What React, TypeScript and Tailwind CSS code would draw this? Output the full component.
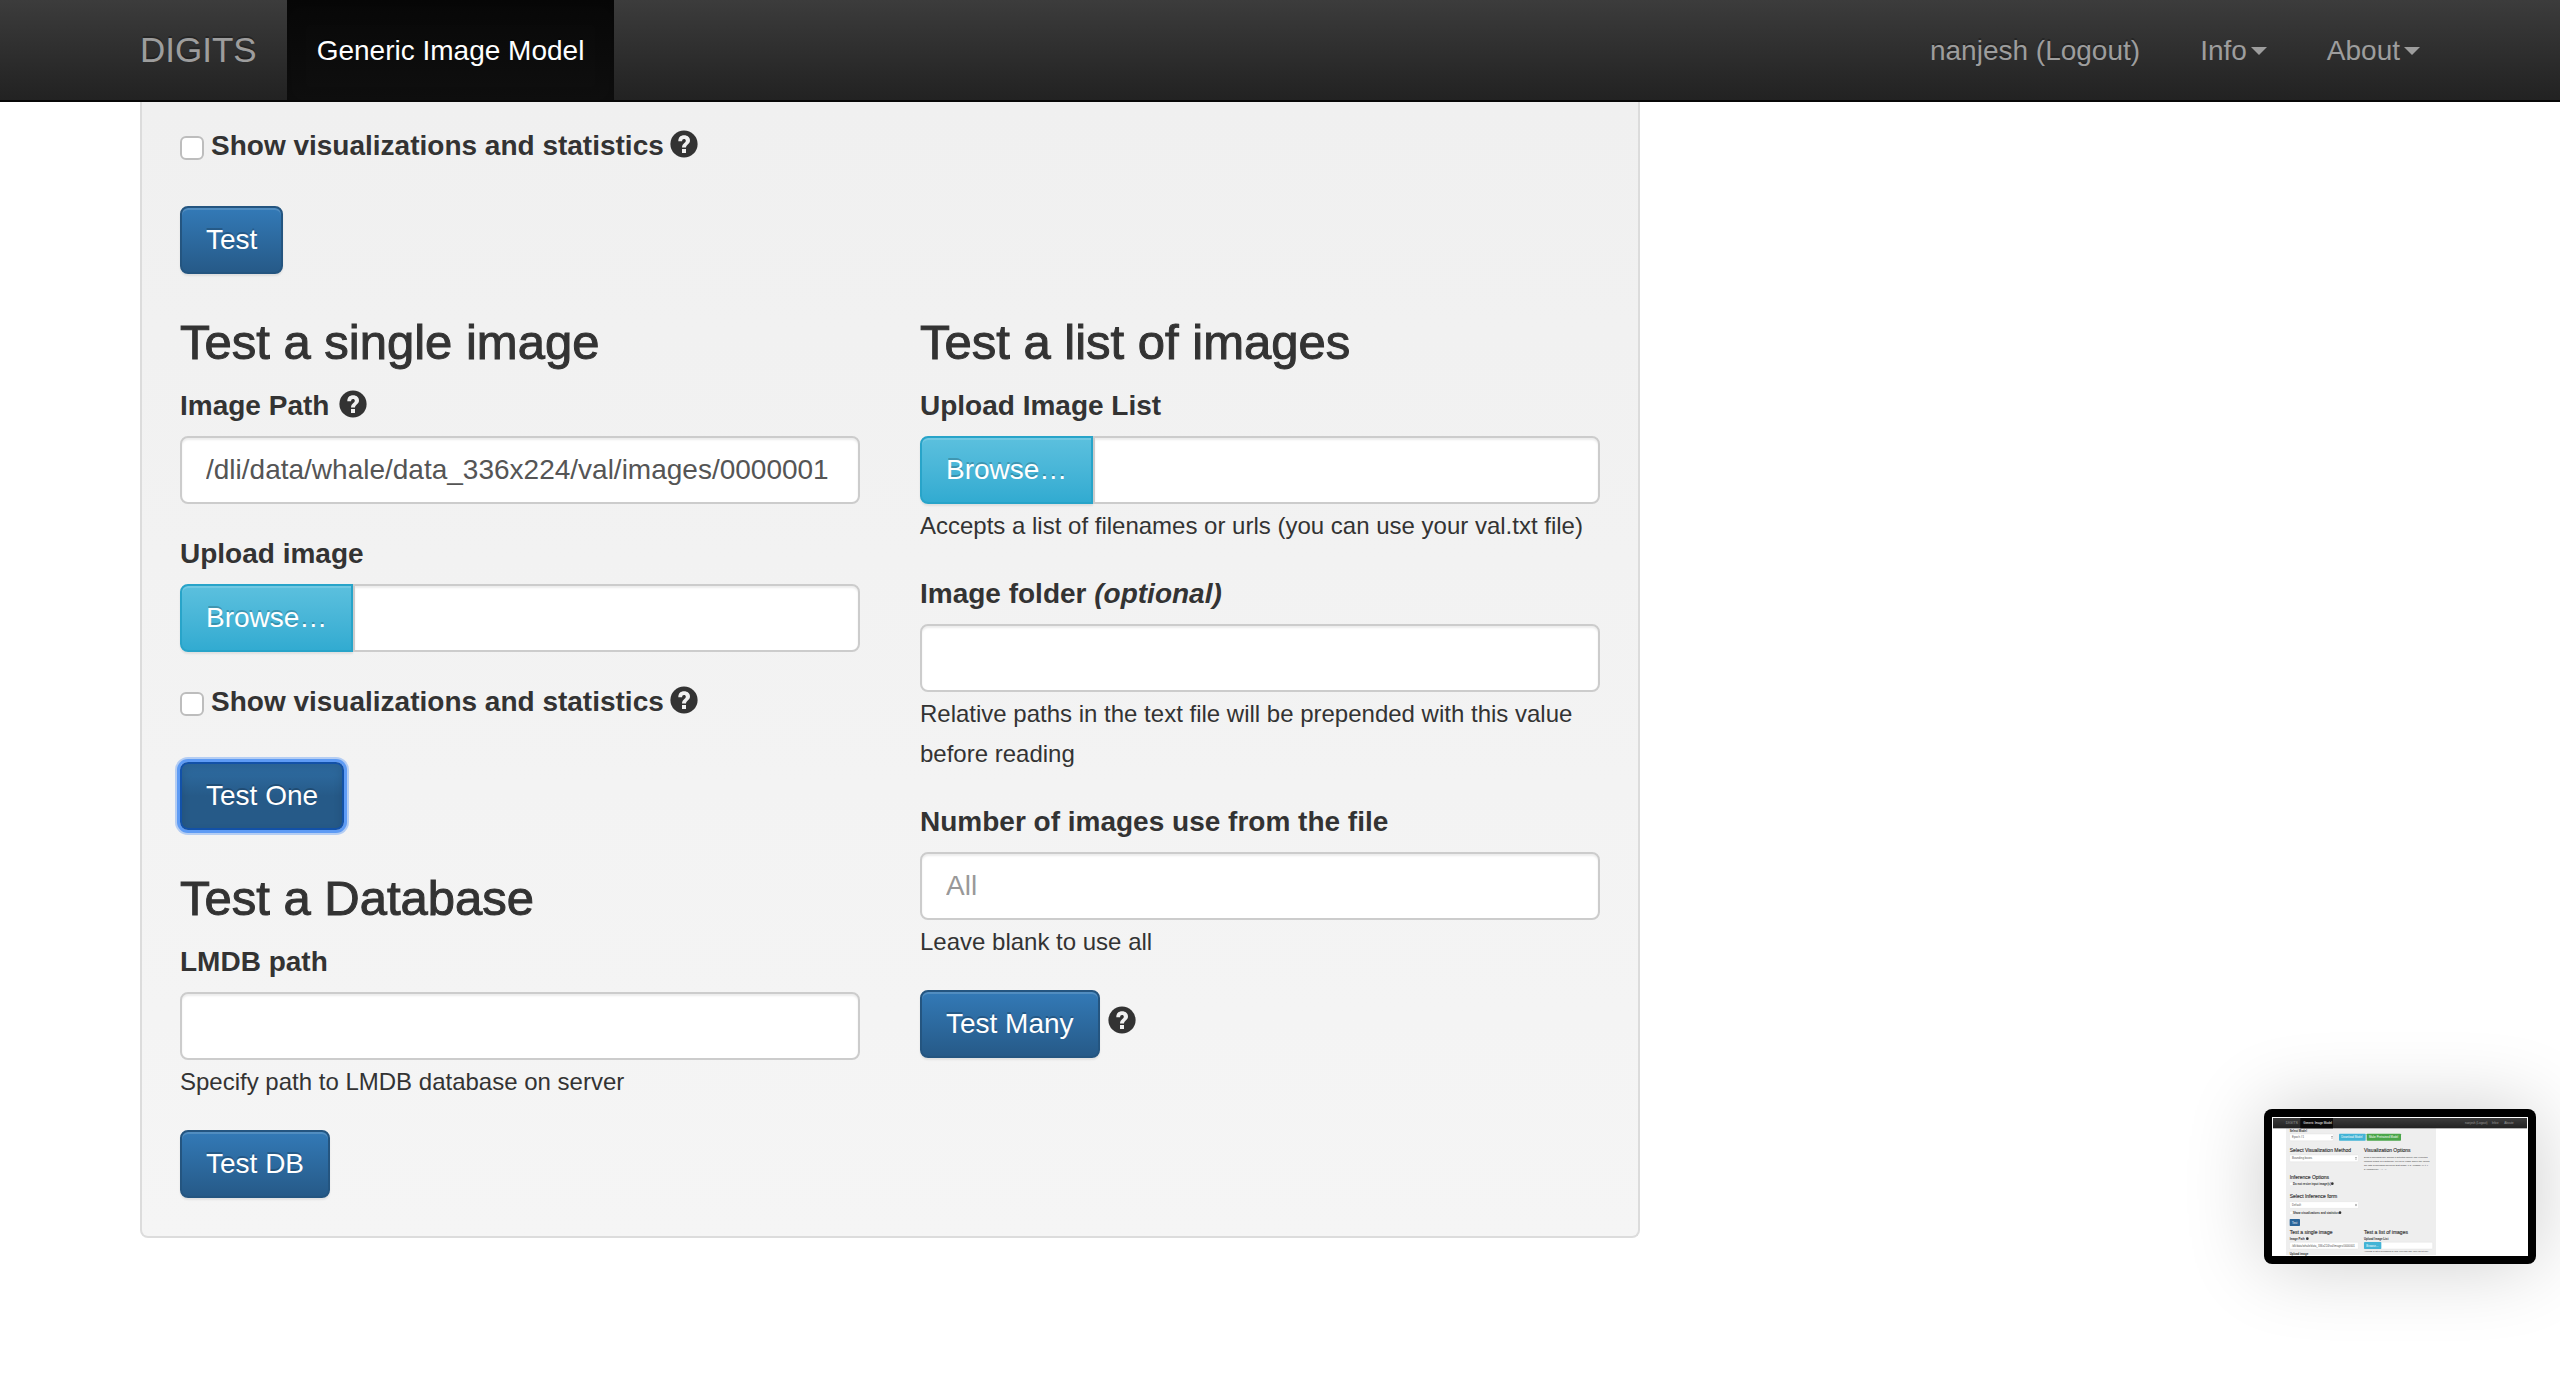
import React from "react";

const groupLabel = "mb-[10px] block font-bold";
const heading = "mb-4 text-[49px] leading-[56px] [-webkit-text-stroke:1px_#333]";
const fieldBox =
  "block h-[68px] w-full min-w-0 rounded-lg border-2 border-[#ccc] bg-white px-6 text-[28px] text-[#555] shadow-[inset_0_2px_2px_rgba(0,0,0,0.075)] outline-none placeholder:text-[#999]";
const primaryButton =
  "h-[68px] rounded-lg border-2 border-[#245580] bg-linear-to-b from-[#337ab7] to-[#265a88] px-6 text-white [text-shadow:0_-2px_0_rgba(0,0,0,0.2)] shadow-[inset_0_2px_0_rgba(255,255,255,0.15),0_2px_2px_rgba(0,0,0,0.075)]";
const pressedButton =
  "h-[68px] rounded-lg border-2 border-[#1251a8] bg-linear-to-b from-[#2f6ea5] to-[#265a88] to-50% px-6 text-white [text-shadow:0_-2px_0_rgba(0,0,0,0.2)] shadow-[inset_0_4px_8px_rgba(0,0,0,0.125),0_0_0_3px_#5e9bf4,0_0_0_5px_#b4cdf3]";

function HelpIcon() {
  return (
    <svg viewBox="0 0 28 28" className="size-7 shrink-0" aria-label="Help" role="img">
      <circle cx="14" cy="14" r="13.6" fill="#333" />
      <path
        d="M8.300 11.200C8.300 7.400 10.600 5.300 14.100 5.300c3.500 0 5.900 2.100 5.900 5.100 0 3.500-4 4.200-4 7.100h-4c0-4 3.800-4.600 3.800-6.800 0-1.100-.7-1.700-1.800-1.700-1.200 0-1.900.8-1.900 2.200z"
        fill="#f1f1f1"
      />
      <rect x="12" y="19" width="4" height="4" fill="#f1f1f1" />
    </svg>
  );
}

function Caret() {
  return (
    <svg viewBox="0 0 16 8" className="ml-1 h-2 w-4" aria-hidden="true">
      <path d="M0 0h16l-8 8z" fill="currentColor" />
    </svg>
  );
}

function Check({ id }: { id: string }) {
  return (
    <div className="mb-10 flex h-10 items-center">
      <input
        id={id}
        type="checkbox"
        className="mt-1 mr-[7px] size-6 appearance-none rounded-md border-2 border-[#bdbdbd] bg-white"
      />
      <label htmlFor={id} className="mr-[6px] font-bold">
        Show visualizations and statistics
      </label>
      <span className="-mt-1 flex">
        <HelpIcon />
      </span>
    </div>
  );
}

function Browse({ id, label }: { id: string; label: string }) {
  return (
    <>
      <label htmlFor={id} className={groupLabel}>
        {label}
      </label>
      <div className="flex">
        <button
          type="button"
          className="h-[68px] shrink-0 rounded-l-lg border-2 border-[#28a4c9] bg-linear-to-b from-[#5bc0de] to-[#31abd1] px-6 text-white [text-shadow:0_-2px_0_rgba(0,0,0,0.2)] shadow-[inset_0_2px_0_rgba(255,255,255,0.15),0_2px_2px_rgba(0,0,0,0.075)]"
        >
          Browse…
        </button>
        <input id={id} readOnly className={`${fieldBox} rounded-l-none`} />
      </div>
    </>
  );
}

function Help({ children }: { children: React.ReactNode }) {
  return <p className="mb-7 pt-0.5 text-[24px] leading-10">{children}</p>;
}

const miniHeads: [number, number, string][] = [
  [53, 104, "Select Visualization Method"],
  [276, 104, "Visualization Options"],
  [53, 186, "Inference Options"],
  [53, 244, "Select Inference form"],
  [53, 351, "Test a single image"],
  [276, 351, "Test a list of images"],
];
const miniBold: [number, number, string][] = [
  [53, 44, "Select Model"],
  [63, 204, "Do not resize input image(s)"],
  [63, 291, "Show visualizations and statistics"],
  [53, 369, "Image Path"],
  [276, 369, "Upload Image List"],
  [53, 414, "Upload image"],
];
const miniText: [number, number, string][] = [
  [276, 123, "Draw a bounding box around a detected object. The expected"],
  [276, 135, "network output is a dictionary, keyed by class, where the values"],
  [276, 147, "are lists of bounding boxes for that image, e.g. {'class1': [[l, t, r,"],
  [276, 159, "b, confidence], ...], ...}"],
  [276, 405, "Accepts a list of filenames or urls (you can use your val.txt file)"],
];
const miniBoxes: [number, number, number, string][] = [
  [53, 51, 131, "Epoch #1"],
  [53, 114, 206, "Bounding boxes"],
  [53, 254, 206, "Default"],
  [53, 376, 206, "/dli/data/whale/data_336x224/val/images/0000001"],
  [276, 376, 206, ""],
];

function ScreenThumbnail() {
  return (
    <svg viewBox="0 0 768 417" className="block w-full" role="img" aria-label="Screen capture preview" fontFamily="Liberation Sans">
      <defs>
        <linearGradient id="miniNav" x1="0" y1="0" x2="0" y2="1">
          <stop offset="0" stopColor="#3c3c3c" />
          <stop offset="1" stopColor="#222" />
        </linearGradient>
      </defs>
      <rect width="768" height="417" fill="#fff" />
      <rect x="42" y="34" width="450" height="380" fill="#eee" />
      <rect x="3" y="3" width="762" height="31" fill="url(#miniNav)" />
      <rect x="85" y="3" width="98" height="31" fill="#0a0a0a" />
      <g fontSize="9" fill="#9d9d9d">
        <text x="41" y="22" fontSize="11">DIGITS</text>
        <text x="94" y="21" fill="#fff">Generic Image Model</text>
        <text x="579" y="21">nanjesh (Logout)</text>
        <text x="659" y="21">Info▾</text>
        <text x="697" y="21">About▾</text>
      </g>
      {miniHeads.map(([x, y, t]) => (
        <text key={t} x={x} y={y} fontSize="15" fill="#333" stroke="#333" strokeWidth="0.4">{t}</text>
      ))}
      {miniBold.map(([x, y, t]) => (
        <text key={t} x={x} y={y} fontSize="8.5" fontWeight="bold" fill="#333">{t}</text>
      ))}
      {miniText.map(([x, y, t]) => (
        <text key={t} x={x} y={y} fontSize="7" fill="#333">{t}</text>
      ))}
      {miniBoxes.map(([x, y, w, t]) => (
        <g key={`${x}-${y}`}>
          <rect x={x} y={y} width={w} height="20" rx="2" fill="#fff" stroke="#ddd" />
          <text x={x + 7} y={y + 13} fontSize="8.5" fill="#555">{t}</text>
        </g>
      ))}
      {[[180, 61], [252, 124], [252, 264]].map(([x, y]) => (
        <path key={`${x}-${y}`} d={`M${x - 2} ${y - 1}l2-3 2 3zm0 2l2 3 2-3z`} fill="#333" />
      ))}
      {[[181, 200], [204, 287], [106, 365]].map(([x, y]) => (
        <circle key={`${x}-${y}`} cx={x} cy={y} r="4" fill="#333" />
      ))}
      <rect x="54" y="197" width="7" height="7" rx="2" fill="#fff" />
      <rect x="54" y="284" width="7" height="7" rx="2" fill="#fff" />
      <g fontSize="8.5" fill="#fff">
        <rect x="201" y="50" width="80" height="21" rx="2" fill="#43b4d6" />
        <text x="208" y="64">Download Model</text>
        <rect x="284" y="50" width="103" height="21" rx="2" fill="#4aa64a" />
        <text x="291" y="64">Make Pretrained Model</text>
        <rect x="53" y="306" width="31" height="21" rx="2" fill="#2b659a" />
        <text x="60" y="320">Test</text>
        <rect x="276" y="375" width="52" height="21" rx="2" fill="#43b4d6" />
        <text x="283" y="389">Browse…</text>
      </g>
    </svg>
  );
}

export default function App() {
  return (
    <div className="min-h-screen bg-white font-['Liberation_Sans',Arial,sans-serif] text-[28px] leading-10 text-[#333]">
      <header className="border-b-2 border-[#080808] bg-linear-to-b from-[#3c3c3c] to-[#222] text-[#9d9d9d] [text-shadow:0_-2px_0_rgba(0,0,0,0.25)]">
        <nav className="mx-auto flex max-w-[2340px]">
          <a href="#home" className="px-[30px] py-[30px] text-[35px]">DIGITS</a>
          <a
            href="#model"
            className="bg-linear-to-b from-[#080808] to-[#0f0f0f] px-[30px] pt-[31px] pb-[29px] text-white shadow-[inset_0_6px_18px_rgba(0,0,0,0.25)]"
          >
            Generic Image Model
          </a>
          <a href="#logout" className="ml-auto px-[30px] pt-[31px] pb-[29px]">nanjesh (Logout)</a>
          <button type="button" className="flex items-center px-[30px] pt-[31px] pb-[29px]">Info<Caret /></button>
          <button type="button" className="flex items-center px-[30px] pt-[31px] pb-[29px]">About<Caret /></button>
        </nav>
      </header>

      <div className="mx-auto max-w-[2340px] px-[30px]">
        <main className="w-[calc((100%+60px)*2/3-60px)] rounded-b-lg border-2 border-t-0 border-[#dcdcdc] bg-linear-to-b from-[#f0f0f0] to-[#f5f5f5] px-[38px] pt-6 pb-[38px]">
          <Check id="show-all" />
          <button type="button" className={primaryButton}>Test</button>

          <div className="mt-10 grid grid-cols-2 items-start gap-[60px]">
            <div>
              <section>
                <h3 className={heading}>Test a single image</h3>
                <div className="mb-[10px] flex items-center gap-[10px]">
                  <label htmlFor="image-path" className="font-bold">Image Path</label>
                  <span className="-mt-1 flex"><HelpIcon /></span>
                </div>
                <input
                  id="image-path"
                  className={fieldBox}
                  defaultValue="/dli/data/whale/data_336x224/val/images/0000001"
                />
                <div className="my-[30px]">
                  <Browse id="upload-image" label="Upload image" />
                </div>
                <Check id="show-one" />
                <button type="button" className={pressedButton}>Test One</button>
              </section>
              <section className="mt-10">
                <h3 className={heading}>Test a Database</h3>
                <label htmlFor="lmdb" className={groupLabel}>LMDB path</label>
                <input id="lmdb" className={fieldBox} />
                <Help>Specify path to LMDB database on server</Help>
                <button type="button" className={primaryButton}>Test DB</button>
              </section>
            </div>

            <section>
              <h3 className={heading}>Test a list of images</h3>
              <Browse id="image-list" label="Upload Image List" />
              <Help>Accepts a list of filenames or urls (you can use your val.txt file)</Help>
              <label htmlFor="folder" className={groupLabel}>
                Image folder <i>(optional)</i>
              </label>
              <input id="folder" className={fieldBox} />
              <Help>Relative paths in the text file will be prepended with this value before reading</Help>
              <label htmlFor="count" className={groupLabel}>Number of images use from the file</label>
              <input id="count" placeholder="All" className={fieldBox} />
              <Help>Leave blank to use all</Help>
              <div className="flex items-center gap-2">
                <button type="button" className={primaryButton}>Test Many</button>
                <span className="-mt-2 flex"><HelpIcon /></span>
              </div>
            </section>
          </div>
        </main>
      </div>

      <aside className="fixed right-6 bottom-[114px] w-[272px] rounded-lg bg-black p-2 shadow-[0_0_80px_rgba(0,0,0,0.2)]">
        <ScreenThumbnail />
      </aside>
    </div>
  );
}
